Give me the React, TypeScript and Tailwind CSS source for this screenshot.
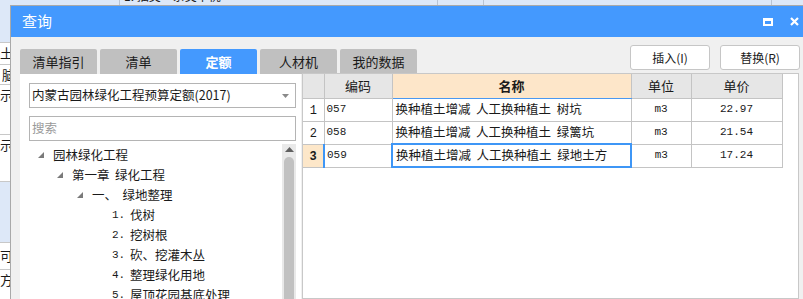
import React from 'react';

const tabs = ['清单指引', '清单', '定额', '人材机', '我的数据'];

const tree = [
  { level: 0, text: '园林绿化工程', arrow: true },
  { level: 1, text: '第一章  绿化工程', arrow: true },
  { level: 2, text: '一、  绿地整理', arrow: true },
  { level: 3, num: '1.', text: '伐树' },
  { level: 3, num: '2.', text: '挖树根' },
  { level: 3, num: '3.', text: '砍、挖灌木丛' },
  { level: 3, num: '4.', text: '整理绿化用地' },
  { level: 3, num: '5.', text: '屋顶花园基底处理' },
];

const rows = [
  { no: '1', code: '057', name: '换种植土增减  人工换种植土  树坑', unit: 'm3', price: '22.97' },
  { no: '2', code: '058', name: '换种植土增减  人工换种植土  绿篱坑', unit: 'm3', price: '21.54' },
  { no: '3', code: '059', name: '换种植土增减  人工换种植土  绿地土方', unit: 'm3', price: '17.24' },
];

const indent = ['pl-[9px]', 'pl-[28px]', 'pl-[48px]', 'pl-[83px]'];

function Tri() {
  return (
    <svg width="6" height="6" viewBox="0 0 6 6" className="shrink-0">
      <path d="M6 0 L6 6 L0 6 Z" fill="#7a7a7a" />
    </svg>
  );
}

export default function App() {
  return (
    <div className="w-[803px] h-[299px] overflow-hidden bg-[#dde8f8] flex flex-col font-['Noto_Sans_CJK_SC',sans-serif] text-[12px] text-[#1a1a1a]">
      {/* background app strip */}
      <div className="h-[5px] flex shrink-0 overflow-hidden">
        <div className="w-[120px] border-r border-[#b8c4d4]"></div>
        <div className="w-[318px] border-r border-[#b8c4d4] pl-[4px] -mt-[12px] leading-[16px] whitespace-nowrap">1. 抽类·杂类卡桃</div>
        <div className="w-[46px] border-r border-[#b8c4d4]"></div>
        <div className="w-[288px] border-r border-[#b8c4d4]"></div>
        <div className="flex-1"></div>
      </div>

      <div className="flex flex-1 min-h-0">
        {/* background app left column */}
        <div className="w-[10px] shrink-0 flex flex-col overflow-hidden text-[13px] leading-[20px] whitespace-nowrap">
          <div className="h-[37px]"></div>
          <div className="h-[23px] bg-white border-y border-[#c8c8c8]">土玛</div>
          <div className="h-[20px] bg-white border-b border-[#c8c8c8] pl-[2px]">脑</div>
          <div className="h-[50px] bg-white border-b border-[#c8c8c8]">示</div>
          <div className="h-[47px] bg-white border-b border-[#c8c8c8]">示</div>
          <div className="h-[60px]"></div>
          <div className="h-[28px] bg-white border-y border-[#c8c8c8] leading-[26px]">可房</div>
          <div className="flex-1 bg-white">方绿</div>
        </div>

        {/* dialog */}
        <div className="flex-1 flex flex-col border-l border-t border-[#a9a9a9] bg-[#f0f0f0]">
          <div className="h-[31px] shrink-0 bg-[#4499fe] flex items-center pl-[11px] pr-[4px] text-white">
            <span className="text-[15px]">查询</span>
            <div className="flex-1"></div>
            <div className="w-[10px] h-[8px] border-2 border-t-[3px] border-white mr-[17px]"></div>
            <svg width="9" height="9" viewBox="0 0 9 9">
              <path d="M1 1 L8 8 M8 1 L1 8" stroke="white" strokeWidth="2.2" />
            </svg>
          </div>

          <div className="flex-1 flex flex-col pl-[9px] pr-[3px] min-h-0">
            {/* tabs and buttons */}
            <div className="h-[37px] shrink-0 flex items-end">
              <div className="flex gap-[3px]">
                {tabs.map((t) =>
                  t === '定额' ? (
                    <div key={t} className="w-[77px] h-[25px] rounded-t-[2px] bg-[#4499fe] text-white font-bold text-[13px] flex items-center justify-center">
                      {t}
                    </div>
                  ) : (
                    <div key={t} className="w-[77px] h-[25px] rounded-t-[2px] bg-[#c0c0c0] text-[13px] flex items-center justify-center">
                      {t}
                    </div>
                  )
                )}
              </div>
              <div className="flex-1"></div>
              <div className="flex gap-[10px] mb-[4px]">
                <button className="w-[80px] h-[25px] bg-white border border-[#c6c6c6] rounded-[3px] text-[12px]">插入(I)</button>
                <button className="w-[80px] h-[25px] bg-white border border-[#c6c6c6] rounded-[3px] text-[12px]">替换(R)</button>
              </div>
            </div>

            <div className="flex flex-1 min-h-0 gap-px">
              {/* left panel */}
              <div className="w-[281px] shrink-0 bg-white pt-[9px] pl-[9px] pr-[5px] flex flex-col">
                <div className="h-[25px] border border-[#b4b4b4] flex items-center pl-[2px] pr-[6px]">
                  <span className="flex-1 text-[12.5px]">内蒙古园林绿化工程预算定额(2017)</span>
                  <svg width="7" height="4" viewBox="0 0 7 4">
                    <path d="M0 0 L7 0 L3.5 4 Z" fill="#8a8a8a" />
                  </svg>
                </div>
                <div className="h-[25px] mt-[8px] border border-[#b4b4b4] flex items-center pl-[2px] text-[#9a9a9a] text-[12.5px]">搜索</div>
                <div className="flex flex-1 mt-[3px] min-h-0">
                  <div className="flex-1 pt-px">
                    {tree.map((n, i) => (
                      <div key={i} className={`h-[20px] flex items-center ${indent[n.level]}`}>
                        {n.arrow ? (
                          <>
                            <Tri />
                            <span className="ml-[9px] whitespace-pre text-[12.5px]">{n.text}</span>
                          </>
                        ) : (
                          <>
                            <span className="w-[18px] text-[11px] font-['Liberation_Mono',monospace]">{n.num}</span>
                            <span className="text-[12.5px]">{n.text}</span>
                          </>
                        )}
                      </div>
                    ))}
                  </div>
                  <div className="w-[14px] bg-[#e9e9e9] flex flex-col items-center pt-[3px]">
                    <svg width="9" height="5" viewBox="0 0 9 5">
                      <path d="M0 5 L9 5 L4.5 0 Z" fill="#606060" />
                    </svg>
                    <div className="w-[10px] flex-1 mt-[5px] bg-[#c1c1c1] rounded-t-[5px]"></div>
                  </div>
                </div>
              </div>

              {/* right panel */}
              <div className="w-[497px] shrink-0 -mt-px border border-[#c8c8c8] bg-white">
                <table className="table-fixed border-collapse text-[12.5px]">
                  <colgroup>
                    <col className="w-[21px]" />
                    <col className="w-[68px]" />
                    <col className="w-[239px]" />
                    <col className="w-[60px]" />
                    <col className="w-[91px]" />
                  </colgroup>
                  <thead>
                    <tr className="h-[24px] text-[13px]">
                      <th className="bg-[#e6e6e6] border border-[#c4c4c4] border-l-0 border-t-0"></th>
                      <th className="bg-[#e6e6e6] border border-[#c4c4c4] border-t-0 font-normal">编码</th>
                      <th className="bg-[#fde6c9] border border-[#c4c4c4] border-t-0 border-b-[#4a98f0] font-bold">名称</th>
                      <th className="bg-[#e6e6e6] border border-[#c4c4c4] border-t-0 font-normal">单位</th>
                      <th className="bg-[#e6e6e6] border border-[#c4c4c4] border-t-0 font-normal">单价</th>
                    </tr>
                  </thead>
                  <tbody>
                    {rows.map((r) => {
                      const sel = r.no === '3';
                      return (
                        <tr key={r.no} className="h-[23px]">
                          <td
                            className={
                              sel
                                ? 'bg-[#fde7c9] border border-[#c4c4c4] border-l-0 border-r-2 border-r-[#3e96f6] text-center font-bold'
                                : 'border border-[#c4c4c4] border-l-0 text-center'
                            }
                          >
                            <span className="font-['Liberation_Mono',monospace] text-[12px]">{r.no}</span>
                          </td>
                          <td className="border border-[#c4c4c4] pl-[2px] font-['Liberation_Mono',monospace] text-[11px]">{r.code}</td>
                          <td
                            className={
                              sel
                                ? 'border-2 border-[#3e96f6] pl-[3px] whitespace-pre'
                                : 'border border-[#c4c4c4] pl-[3px] whitespace-pre'
                            }
                          >
                            {r.name}
                          </td>
                          <td className="border border-[#c4c4c4] text-center font-['Liberation_Mono',monospace] text-[11px]">{r.unit}</td>
                          <td className="border border-[#c4c4c4] text-center font-['Liberation_Mono',monospace] text-[11px]">{r.price}</td>
                        </tr>
                      );
                    })}
                  </tbody>
                </table>
              </div>
            </div>
          </div>
        </div>
      </div>
    </div>
  );
}
